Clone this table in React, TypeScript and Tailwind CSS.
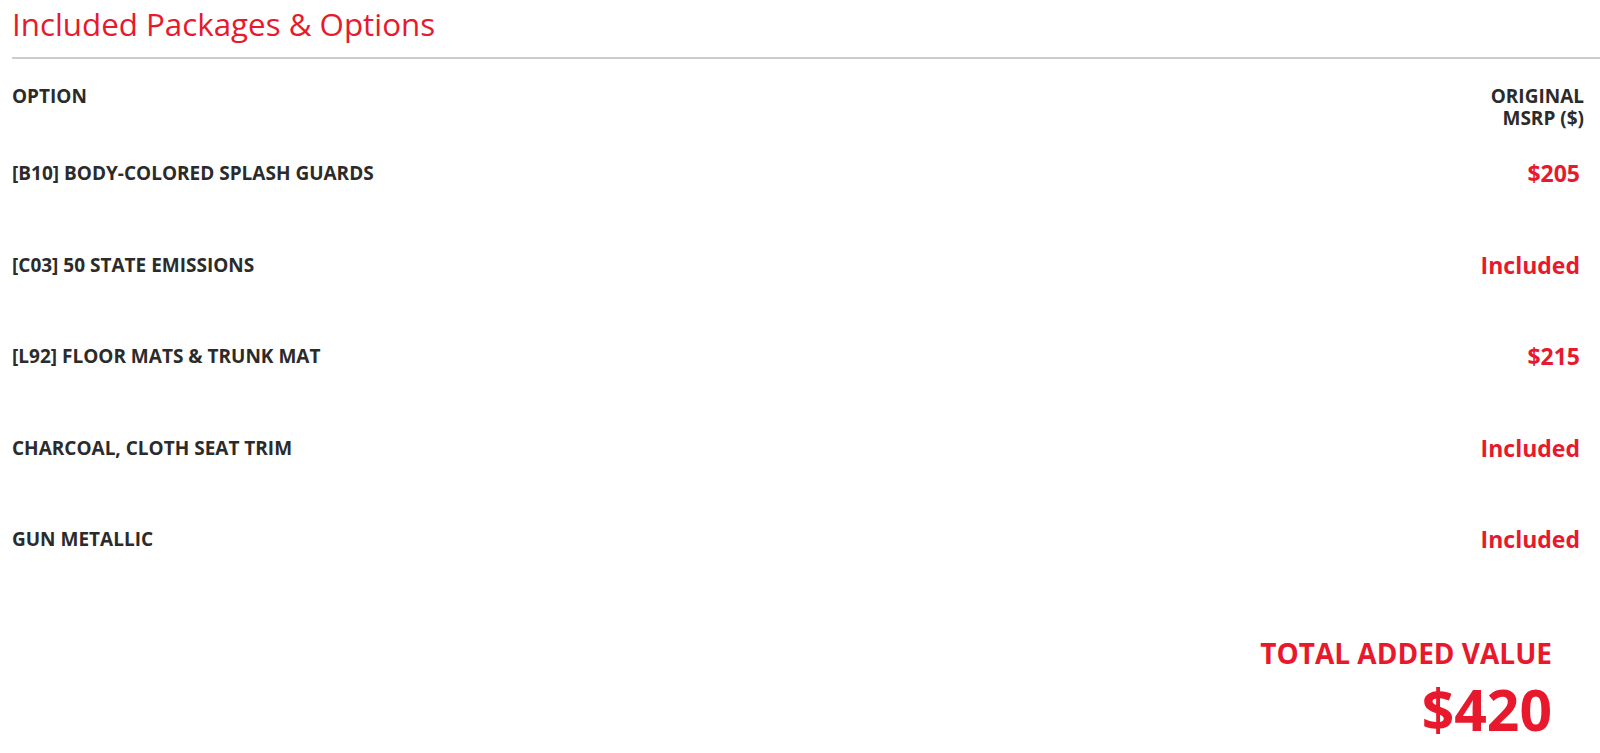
const RED = 'text-[#e8192c]';

type Option = { label: string; price: string };

const OPTIONS: Option[] = [
  { label: '[B10] BODY-COLORED SPLASH GUARDS', price: '$205' },
  { label: '[C03] 50 STATE EMISSIONS', price: 'Included' },
  { label: '[L92] FLOOR MATS & TRUNK MAT', price: '$215' },
  { label: 'CHARCOAL, CLOTH SEAT TRIM', price: 'Included' },
  { label: 'GUN METALLIC', price: 'Included' },
];

export default function App() {
  return (
    <div className="min-h-screen bg-white pl-3 font-['Open_Sans',sans-serif] text-[#2b2b2b]">
      {/* Title */}
      <h2 className={`pt-1 text-[31.3px] leading-[41px] font-normal ${RED}`}>
        Included Packages &amp; Options
      </h2>
      <div className="mt-3 border-t-2 border-[#cccccc]" />

      <div className="pr-4">
        {/* Header */}
        <div className="mt-[26px] flex items-start justify-between text-[19px] font-bold leading-[22px]">
          <span>OPTION</span>
          <span className="text-right">
            ORIGINAL
            <br />
            MSRP ($)
          </span>
        </div>

        {/* Rows */}
        <div className="mt-[33px] flex flex-col gap-[69.5px]">
          {OPTIONS.map((o) => (
            <div key={o.label} className="flex h-[22px] items-center justify-between">
              <span className="text-[19px] font-bold leading-[22px]">{o.label}</span>
              <span className={`pr-1 text-[23px] font-bold leading-[22px] ${RED}`}>{o.price}</span>
            </div>
          ))}
        </div>

        {/* Total */}
        <div className={`mt-[87px] flex flex-col items-end pr-8 font-bold ${RED}`}>
          <span className="text-[28px] leading-[32px]">TOTAL ADDED VALUE</span>
          <span className="mt-[12px] text-[57px] leading-none">$420</span>
        </div>
      </div>
    </div>
  );
}
